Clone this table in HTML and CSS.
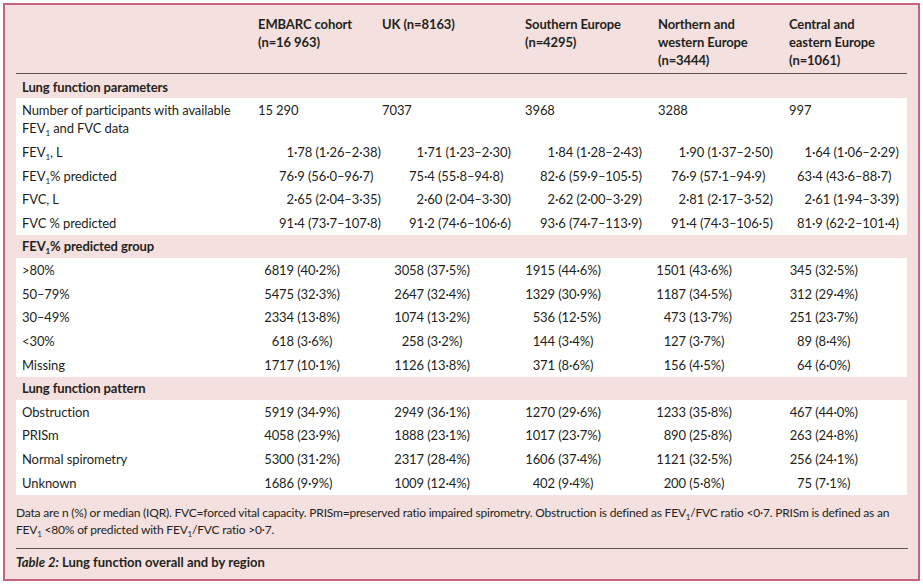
FILE: index.html
```html
<!DOCTYPE html>
<html lang="en">
<head>
<meta charset="utf-8">
<title>Table 2: Lung function overall and by region</title>
<link rel="stylesheet" href="styles.css">
</head>
<body>
<div class="frame">
  <table class="data">
    <colgroup>
      <col class="w-label"><col class="w-c1"><col class="w-c2"><col class="w-c3"><col class="w-c4"><col class="w-c5">
    </colgroup>
    <thead>
      <tr>
        <th></th>
        <th>EMBARC cohort<br>(n=16&#8197;963)</th>
        <th>UK (n=8163)</th>
        <th>Southern Europe<br>(n=4295)</th>
        <th>Northern and<br>western Europe<br>(n=3444)</th>
        <th>Central and<br>eastern Europe<br>(n=1061)</th>
      </tr>
    </thead>
    <tbody>
      <tr class="sec"><th colspan="6">Lung function parameters</th></tr>
      <tr>
        <td>Number of participants with available<br>FEV<span class="sub">1</span> and FVC data</td>
        <td class="plain">15&#8197;290</td><td class="plain">7037</td><td class="plain">3968</td><td class="plain">3288</td><td class="plain">997</td>
      </tr>
      <tr>
        <td>FEV<span class="sub">1</span>, L</td>
        <td><span class="i">1</span>·78 (1·26–2·38)</td>
        <td><span class="i">1</span>·71 (1·23–2·30)</td>
        <td><span class="i">1</span>·84 (1·28–2·43)</td>
        <td><span class="i">1</span>·90 (1·37–2·50)</td>
        <td><span class="i">1</span>·64 (1·06–2·29)</td>
      </tr>
      <tr>
        <td>FEV<span class="sub">1</span>% predicted</td>
        <td><span class="i">76</span>·9 (56·0–96·7)</td>
        <td><span class="i">75</span>·4 (55·8–94·8)</td>
        <td><span class="i">82</span>·6 (59·9–105·5)</td>
        <td><span class="i">76</span>·9 (57·1–94·9)</td>
        <td><span class="i">63</span>·4 (43·6–88·7)</td>
      </tr>
      <tr>
        <td>FVC, L</td>
        <td><span class="i">2</span>·65 (2·04–3·35)</td>
        <td><span class="i">2</span>·60 (2·04–3·30)</td>
        <td><span class="i">2</span>·62 (2·00–3·29)</td>
        <td><span class="i">2</span>·81 (2·17–3·52)</td>
        <td><span class="i">2</span>·61 (1·94–3·39)</td>
      </tr>
      <tr>
        <td>FVC % predicted</td>
        <td><span class="i">91</span>·4 (73·7–107·8)</td>
        <td><span class="i">91</span>·2 (74·6–106·6)</td>
        <td><span class="i">93</span>·6 (74·7–113·9)</td>
        <td><span class="i">91</span>·4 (74·3–106·5)</td>
        <td><span class="i">81</span>·9 (62·2–101·4)</td>
      </tr>
    </tbody>
    <tbody>
      <tr class="sec"><th colspan="6">FEV<span class="sub">1</span>% predicted group</th></tr>
      <tr>
        <td>&gt;80%</td>
        <td><span class="i">6819</span> (40·2%)</td>
        <td><span class="i">3058</span> (37·5%)</td>
        <td><span class="i">1915</span> (44·6%)</td>
        <td><span class="i">1501</span> (43·6%)</td>
        <td><span class="i">345</span> (32·5%)</td>
      </tr>
      <tr>
        <td>50–79%</td>
        <td><span class="i">5475</span> (32·3%)</td>
        <td><span class="i">2647</span> (32·4%)</td>
        <td><span class="i">1329</span> (30·9%)</td>
        <td><span class="i">1187</span> (34·5%)</td>
        <td><span class="i">312</span> (29·4%)</td>
      </tr>
      <tr>
        <td>30–49%</td>
        <td><span class="i">2334</span> (13·8%)</td>
        <td><span class="i">1074</span> (13·2%)</td>
        <td><span class="i">536</span> (12·5%)</td>
        <td><span class="i">473</span> (13·7%)</td>
        <td><span class="i">251</span> (23·7%)</td>
      </tr>
      <tr>
        <td>&lt;30%</td>
        <td><span class="i">618</span> (3·6%)</td>
        <td><span class="i">258</span> (3·2%)</td>
        <td><span class="i">144</span> (3·4%)</td>
        <td><span class="i">127</span> (3·7%)</td>
        <td><span class="i">89</span> (8·4%)</td>
      </tr>
      <tr>
        <td>Missing</td>
        <td><span class="i">1717</span> (10·1%)</td>
        <td><span class="i">1126</span> (13·8%)</td>
        <td><span class="i">371</span> (8·6%)</td>
        <td><span class="i">156</span> (4·5%)</td>
        <td><span class="i">64</span> (6·0%)</td>
      </tr>
    </tbody>
    <tbody>
      <tr class="sec"><th colspan="6">Lung function pattern</th></tr>
      <tr>
        <td>Obstruction</td>
        <td><span class="i">5919</span> (34·9%)</td>
        <td><span class="i">2949</span> (36·1%)</td>
        <td><span class="i">1270</span> (29·6%)</td>
        <td><span class="i">1233</span> (35·8%)</td>
        <td><span class="i">467</span> (44·0%)</td>
      </tr>
      <tr>
        <td>PRISm</td>
        <td><span class="i">4058</span> (23·9%)</td>
        <td><span class="i">1888</span> (23·1%)</td>
        <td><span class="i">1017</span> (23·7%)</td>
        <td><span class="i">890</span> (25·8%)</td>
        <td><span class="i">263</span> (24·8%)</td>
      </tr>
      <tr>
        <td>Normal spirometry</td>
        <td><span class="i">5300</span> (31·2%)</td>
        <td><span class="i">2317</span> (28·4%)</td>
        <td><span class="i">1606</span> (37·4%)</td>
        <td><span class="i">1121</span> (32·5%)</td>
        <td><span class="i">256</span> (24·1%)</td>
      </tr>
      <tr>
        <td>Unknown</td>
        <td><span class="i">1686</span> (9·9%)</td>
        <td><span class="i">1009</span> (12·4%)</td>
        <td><span class="i">402</span> (9·4%)</td>
        <td><span class="i">200</span> (5·8%)</td>
        <td><span class="i">75</span> (7·1%)</td>
      </tr>
    </tbody>
  </table>
  <p class="note">Data are n (%) or median (IQR). FVC=forced vital capacity. PRISm=preserved ratio impaired spirometry. Obstruction is defined as FEV<span class="sub">1</span>/FVC ratio &lt;0·7. PRISm is defined as an<br>FEV<span class="sub">1</span> &lt;80% of predicted with FEV<span class="sub">1</span>/FVC ratio &gt;0·7.</p>
  <p class="caption"><em>Table 2:</em> Lung function overall and by region</p>
</div>
</body>
</html>
```

FILE: styles.css
```css
html, body {
  margin: 0;
  padding: 0;
  background: #ffffff;
}

body {
  font-family: "Lato", "Open Sans", sans-serif;
  font-size: 13px;
  color: #231f20;
}

.frame {
  box-sizing: border-box;
  width: 917px;
  height: 578px;
  margin: 3px 0 0 3px;
  padding: 0 10px 0 11px;
  border: 2px solid #c7637f;
  background: #f4e1df;
  overflow: hidden;
}

.data {
  width: 891px;
  border-collapse: collapse;
  table-layout: fixed;
  line-height: 18px;
  letter-spacing: -0.1px;
}

.w-label { width: 236px; }
.w-c1 { width: 124px; }
.w-c2 { width: 143px; }
.w-c3 { width: 133px; }
.w-c4 { width: 131px; }
.w-c5 { width: 124px; }

.data th,
.data td {
  padding: 3px 6px 2.75px;
  text-align: left;
  vertical-align: top;
  white-space: nowrap;
}

.data thead th {
  font-weight: 700;
  padding-top: 10px;
  padding-bottom: 4px;
  border-bottom: 1.5px solid #5e5252;
}

.data tbody td {
  background: #ffffff;
}

.data .sec th {
  font-weight: 700;
  padding-top: 2px;
  padding-bottom: 3px;
  background: transparent;
}

.data tbody:first-of-type .sec th {
  padding-top: 4px;
  padding-bottom: 2px;
}

.i {
  display: inline-flex;
  justify-content: flex-end;
}

.data td:nth-child(2) .i { width: 36px; }
.data td:nth-child(3) .i { width: 42px; }
.data td:nth-child(4) .i { width: 30px; }
.data td:nth-child(5) .i { width: 28px; }
.data td:nth-child(6) .i { width: 23px; }

.sub {
  font-size: 8px;
  position: relative;
  top: 3px;
  line-height: 0;
}

.note {
  margin: 9px 0 0;
  padding-bottom: 10px;
  font-size: 12px;
  line-height: 17px;
  letter-spacing: -0.2px;
  white-space: nowrap;
  border-bottom: 1.5px solid #5e5252;
}

.caption {
  margin: 4px 0 0;
  font-weight: 700;
  line-height: 18px;
  font-size: 13px;
}

.caption em {
  font-style: italic;
}
```
